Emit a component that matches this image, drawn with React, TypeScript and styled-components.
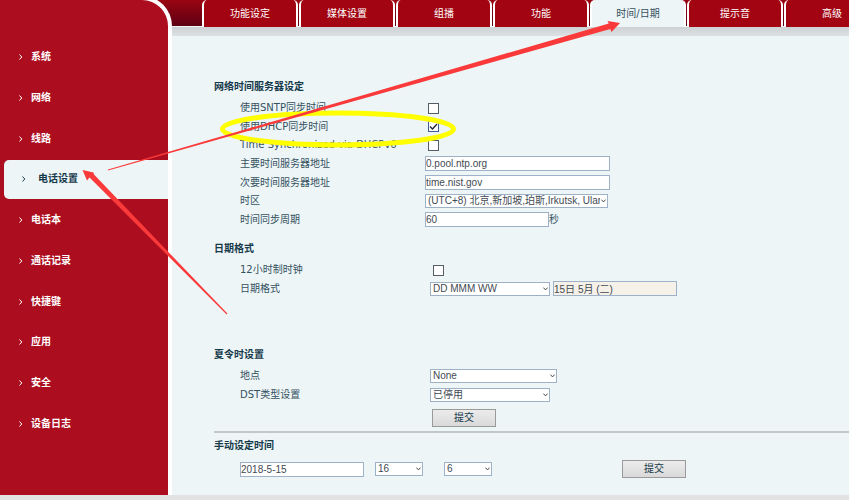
import React, { useId } from "react";
import styled, { createGlobalStyle } from "styled-components";

const GlobalStyle = createGlobalStyle`
  *, *::before, *::after { box-sizing: border-box; }
  body {
    margin: 0;
    background: #e2e2e2;
    color: #35525f;
    font-family: "DejaVu Sans", "Noto Sans CJK SC", sans-serif;
    font-size: 10px;
    line-height: 16px;
  }
`;

const Page = styled.div`
  position: relative;
  overflow: hidden;
`;

const Shell = styled.div`
  display: grid;
  grid-template-columns: 172px minmax(0, 1fr);
  background: linear-gradient(#9b0512, #5c0013) top / 100% 26px no-repeat, #edf5f7;
`;

const Sidebar = styled.aside`
  margin-top: -4px;
  padding: 37px 0 50px;
  background: #ad0e1f;
  border: solid #fff;
  border-width: 4px 4px 0 0;
  border-top-right-radius: 30px;
`;

const Menu = styled.nav`
  display: grid;
  grid-auto-rows: 1fr;
  min-height: 407px;
`;

const MenuLink = styled.a<{ $active?: boolean }>`
  display: flex;
  align-items: center;
  gap: ${(p) => (p.$active ? 12 : 8)}px;
  margin: 1px 0 1px 4px;
  padding-left: ${(p) => (p.$active ? 17 : 14)}px;
  border-radius: 5px 0 0 5px;
  background: ${(p) => (p.$active ? "#edf5f7" : "transparent")};
  color: ${(p) => (p.$active ? "#163a4a" : "#fff")};
  font-weight: bold;
  text-decoration: none;
`;

const MenuArrow = styled.svg`
  width: 5px;
  height: 6px;
  fill: none;
  stroke: currentColor;
`;

const Content = styled.div`
  min-width: 0;
`;

const TabBar = styled.nav`
  display: flex;
  gap: 1px;
  height: 27px;
  padding-left: 30px;
  overflow: hidden;
`;

const Tab = styled.a<{ $active?: boolean }>`
  flex: none;
  display: flex;
  align-items: center;
  justify-content: center;
  width: 96px;
  border: solid #fff;
  border-width: 0 2px;
  border-radius: 5px 5px 0 0;
  background: ${(p) => (p.$active ? "#edf5f7" : "#a20411")};
  color: ${(p) => (p.$active ? "#35525f" : "#fff")};
  text-decoration: none;
`;

const TabShadow = styled.div`
  height: 9px;
  background: linear-gradient(#cdd1d4, #dce1e4);
`;

const Form = styled.form`
  padding: 43px 0 17px 42px;
`;

const Section = styled.section<{ $gap?: number }>`
  margin-top: ${(p) => p.$gap ?? 0}px;
`;

const Title = styled.h2`
  margin: 0 0 4px;
  color: #163a4a;
  font-size: 10px;
  line-height: 16px;
  font-weight: bold;
`;

const Rows = styled.div<{ $height: number }>`
  display: grid;
  grid-auto-rows: 1fr;
  min-height: ${(p) => p.$height}px;
  padding-left: 26px;
`;

const Row = styled.div<{ $label: number }>`
  display: grid;
  grid-template-columns: ${(p) => p.$label}px auto;
  justify-content: start;
  align-items: center;
`;

const Controls = styled.div<{ $gap?: number }>`
  display: flex;
  align-items: center;
  gap: ${(p) => p.$gap ?? 0}px;
`;

const TextInput = styled.input<{ $width: number }>`
  width: ${(p) => p.$width}px;
  height: 15px;
  padding: 0;
  border: 1px solid #9db2c8;
  border-radius: 0;
  background: #fff;
  color: #3f4a52;
  font: 10px/13px "Liberation Sans", "Noto Sans CJK SC", sans-serif;
  &:read-only { background: #f5f1e8; }
`;

const Check = styled.input`
  appearance: none;
  width: 11px;
  height: 11px;
  margin: 0 3px;
  border: 1px solid #555e64;
  background: #fff;
  &:checked {
    border-color: #3f5c94;
    background: #fff url("data:image/svg+xml,%3Csvg xmlns='http://www.w3.org/2000/svg' viewBox='0 0 9 9'%3E%3Cpath d='M1 4.5 3.5 7 8 2' fill='none' stroke='%23223' stroke-width='1.3'/%3E%3C/svg%3E") center / 9px;
  }
`;

const SelectBox = styled.span<{ $width: number }>`
  position: relative;
  display: block;
  width: ${(p) => p.$width}px;
`;

const SelectInput = styled.select`
  appearance: none;
  display: block;
  width: 100%;
  height: 14px;
  padding: 0 7px 0 2px;
  border: 1px solid #9db2c8;
  border-radius: 0;
  background: #fff;
  color: #3f4a52;
  font: 10px/12px "Liberation Sans", "Noto Sans CJK SC", sans-serif;
`;

const SelectArrow = styled.svg`
  position: absolute;
  right: 2px;
  top: 5px;
  width: 5px;
  height: 4px;
  fill: none;
  stroke: #444;
  pointer-events: none;
`;

const Submit = styled.button`
  display: block;
  width: 64px;
  height: 18px;
  padding: 0;
  border: 1px solid #9a9a9a;
  background: linear-gradient(#ececec, #d9d9d9);
  color: #163a4a;
  font: 10px/14px "DejaVu Sans", "Noto Sans CJK SC", sans-serif;
`;

const SubmitRow = styled.div`
  padding: 5px 0 4px 218px;
`;

const Divider = styled.hr`
  height: 2px;
  margin: 0 0 5px;
  border: 0;
  background: #c3c7ca;
`;

const ManualRow = styled.div`
  display: flex;
  align-items: center;
  padding: 2px 0 0 26px;
  column-gap: 11px;
`;

const MinuteSlot = styled.div`
  padding-left: 10px;
`;

const ManualSubmit = styled.div`
  padding-left: 119px;
`;

const Annotations = styled.svg`
  position: absolute;
  left: 0;
  top: 0;
  width: 849px;
  height: 500px;
  pointer-events: none;
`;

const menu = ["系统", "网络", "线路", "电话设置", "电话本", "通话记录", "快捷键", "应用", "安全", "设备日志"];
const tabs = ["功能设定", "媒体设置", "组播", "功能", "时间/日期", "提示音", "高级"];

function Field({ label, labelWidth = 185, gap, children }: {
  label: string;
  labelWidth?: number;
  gap?: number;
  children: (id: string) => React.ReactNode;
}) {
  const id = useId();
  return (
    <Row $label={labelWidth}>
      <label htmlFor={id}>{label}</label>
      <Controls $gap={gap}>{children(id)}</Controls>
    </Row>
  );
}

function Select({ width, value, ...rest }: { width: number; value: string; id?: string; "aria-label"?: string }) {
  return (
    <SelectBox $width={width}>
      <SelectInput defaultValue={value} {...rest}>
        <option>{value}</option>
      </SelectInput>
      <SelectArrow viewBox="0 0 5 4"><path d="M.4.6 2.5 2.9 4.6.6" /></SelectArrow>
    </SelectBox>
  );
}

export default function App() {
  return (
    <Page>
      <GlobalStyle />
      <Shell>
        <Sidebar>
          <Menu>
            {menu.map((name) => (
              <MenuLink key={name} href="#" $active={name === "电话设置"}>
                <MenuArrow viewBox="0 0 5 6"><path d="M1.5.5 3.8 3 1.5 5.5" /></MenuArrow>
                {name}
              </MenuLink>
            ))}
          </Menu>
        </Sidebar>
        <Content>
          <TabBar>
            {tabs.map((name) => (
              <Tab key={name} href="#" $active={name === "时间/日期"}>{name}</Tab>
            ))}
          </TabBar>
          <TabShadow />
          <Form onSubmit={(e) => e.preventDefault()}>
            <Section>
              <Title>网络时间服务器设定</Title>
              <Rows $height={130}>
                <Field label="使用SNTP同步时间">{(id) => <Check id={id} type="checkbox" />}</Field>
                <Field label="使用DHCP同步时间">{(id) => <Check id={id} type="checkbox" defaultChecked />}</Field>
                <Field label="Time Synchronized via DHCPv6">{(id) => <Check id={id} type="checkbox" />}</Field>
                <Field label="主要时间服务器地址">{(id) => <TextInput id={id} $width={185} defaultValue="0.pool.ntp.org" />}</Field>
                <Field label="次要时间服务器地址">{(id) => <TextInput id={id} $width={185} defaultValue="time.nist.gov" />}</Field>
                <Field label="时区">{(id) => <Select id={id} width={183} value="(UTC+8) 北京,新加坡,珀斯,Irkutsk, Ular" />}</Field>
                <Field label="时间同步周期">
                  {(id) => <><TextInput id={id} $width={124} defaultValue="60" /><span>秒</span></>}
                </Field>
              </Rows>
            </Section>
            <Section $gap={12}>
              <Title>日期格式</Title>
              <Rows $height={37}>
                <Field label="12小时制时钟" labelWidth={190}>{(id) => <Check id={id} type="checkbox" />}</Field>
                <Field label="日期格式" labelWidth={190} gap={3}>
                  {(id) => (
                    <>
                      <Select id={id} width={120} value="DD MMM WW" />
                      <TextInput $width={124} readOnly aria-label="日期格式" value="15日 5月 (二)" />
                    </>
                  )}
                </Field>
              </Rows>
            </Section>
            <Section $gap={49}>
              <Title>夏令时设置</Title>
              <Rows $height={37}>
                <Field label="地点" labelWidth={190}>{(id) => <Select id={id} width={127} value="None" />}</Field>
                <Field label="DST类型设置" labelWidth={190}>{(id) => <Select id={id} width={120} value="已停用" />}</Field>
              </Rows>
              <SubmitRow><Submit>提交</Submit></SubmitRow>
            </Section>
            <Divider />
            <Section>
              <Title>手动设定时间</Title>
              <ManualRow>
                <TextInput $width={124} aria-label="日期" defaultValue="2018-5-15" />
                <Select width={48} aria-label="时" value="16" />
                <MinuteSlot><Select width={48} aria-label="分" value="6" /></MinuteSlot>
                <ManualSubmit><Submit>提交</Submit></ManualSubmit>
              </ManualRow>
            </Section>
          </Form>
        </Content>
      </Shell>
      <Annotations viewBox="0 0 849 500" aria-hidden="true">
        <ellipse cx="338" cy="129" rx="115.5" ry="16" fill="none" stroke="#ffff00" strokeWidth="5" />
        <g fill="#fa3a3a">
          <path d="M108 169.5 608.8 23.5 607.5 21 620 23 611.5 32 610.3 29 108 170.5Z" />
          <path d="M226.6 314.4 89.5 177.5 87 180.5 82.5 170 93.5 172.5 94 174.5 227.4 313.6Z" />
        </g>
      </Annotations>
    </Page>
  );
}
